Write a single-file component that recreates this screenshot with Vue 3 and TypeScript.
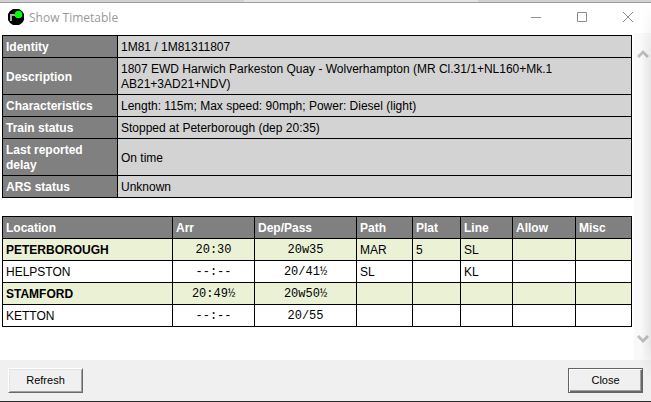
<script setup lang="ts">
interface Detail {
  label: string
  value: string
}

interface Stop {
  location: string
  booked: boolean
  arr: string
  dep: string
  path: string
  plat: string
  line: string
  allow: string
  misc: string
}

const details: Detail[] = [
  { label: 'Identity', value: '1M81 / 1M81311807' },
  {
    label: 'Description',
    value: '1807 EWD Harwich Parkeston Quay - Wolverhampton (MR Cl.31/1+NL160+Mk.1 AB21+3AD21+NDV)',
  },
  { label: 'Characteristics', value: 'Length: 115m; Max speed: 90mph; Power: Diesel (light)' },
  { label: 'Train status', value: 'Stopped at Peterborough (dep 20:35)' },
  { label: 'Last reported delay', value: 'On time' },
  { label: 'ARS status', value: 'Unknown' },
]

const headings: string[] = ['Location', 'Arr', 'Dep/Pass', 'Path', 'Plat', 'Line', 'Allow', 'Misc']

const stops: Stop[] = [
  { location: 'PETERBOROUGH', booked: true, arr: '20:30', dep: '20w35', path: 'MAR', plat: '5', line: 'SL', allow: '', misc: '' },
  { location: 'HELPSTON', booked: false, arr: '--:--', dep: '20/41½', path: 'SL', plat: '', line: 'KL', allow: '', misc: '' },
  { location: 'STAMFORD', booked: true, arr: '20:49½', dep: '20w50½', path: '', plat: '', line: '', allow: '', misc: '' },
  { location: 'KETTON', booked: false, arr: '--:--', dep: '20/55', path: '', plat: '', line: '', allow: '', misc: '' },
]
</script>

<template>
  <div class="desktop">
    <div class="behind"><div class="behind-tab"></div></div>
    <div class="window">
      <header class="titlebar">
        <svg class="app-icon" viewBox="0 0 16 16" aria-hidden="true">
          <path d="M5 0h6l3 2 2 3v6l-2 3-3 2H5l-3-2-2-3V5l2-3z" fill="#000" />
          <path d="M2 5h5v2H4v5H2z" fill="#a8a8a8" />
          <circle cx="10.5" cy="5.5" r="3.8" fill="#00ff00" />
        </svg>
        <span class="title">Show Timetable</span>
        <div class="controls">
          <button type="button" class="control" aria-label="Minimize">
            <svg viewBox="0 0 12 12"><path d="M1 6.5h10" /></svg>
          </button>
          <button type="button" class="control" aria-label="Maximize">
            <svg viewBox="0 0 12 12"><path d="M1.5 1.5h9v9h-9z" /></svg>
          </button>
          <button type="button" class="control" aria-label="Close window">
            <svg viewBox="0 0 12 12"><path d="M1 1l10 10M11 1L1 11" /></svg>
          </button>
        </div>
      </header>

      <div class="body">
        <main class="content">
          <table class="grid details">
            <tbody>
              <tr v-for="d in details" :key="d.label">
                <th scope="row">{{ d.label }}</th>
                <td>{{ d.value }}</td>
              </tr>
            </tbody>
          </table>

          <table class="grid stops">
            <colgroup>
              <col />
              <col class="w-arr" />
              <col class="w-dep" />
              <col class="w-path" />
              <col class="w-plat" />
              <col class="w-line" />
              <col class="w-allow" />
              <col class="w-misc" />
            </colgroup>
            <thead>
              <tr>
                <th v-for="h in headings" :key="h" scope="col">{{ h }}</th>
              </tr>
            </thead>
            <tbody>
              <tr v-for="s in stops" :key="s.location" :class="{ booked: s.booked }">
                <td class="location">{{ s.location }}</td>
                <td class="time">{{ s.arr }}</td>
                <td class="time">{{ s.dep }}</td>
                <td>{{ s.path }}</td>
                <td>{{ s.plat }}</td>
                <td>{{ s.line }}</td>
                <td>{{ s.allow }}</td>
                <td>{{ s.misc }}</td>
              </tr>
            </tbody>
          </table>
        </main>
        <div class="scrollbar" aria-hidden="true">
          <svg viewBox="0 0 12 10"><path d="M1 8l5-5 5 5" /></svg>
          <svg viewBox="0 0 12 10"><path d="M1 2l5 5 5-5" /></svg>
        </div>
      </div>

      <footer class="footer">
        <button type="button" class="push">Refresh</button>
        <button type="button" class="push default">Close</button>
      </footer>
    </div>
  </div>
</template>

<style>
body {
  margin: 0;
}
</style>

<style scoped>
.desktop {
  display: flex;
  flex-direction: column;
  min-height: 100vh;
  font-family: "Liberation Sans", Arial, sans-serif;
  font-size: 12px;
  line-height: 15px;
  color: #000;
}

.behind {
  display: flex;
  justify-content: center;
  height: 2px;
  background: #d2d2d2;
}

.behind-tab {
  width: 36%;
  margin-left: 11%;
  background: #e4e4e4;
}

.window {
  position: relative;
  flex: 1;
  display: flex;
  flex-direction: column;
  box-sizing: border-box;
  border-top: 1px solid #9c9c9c;
  border-bottom: 1px solid #2b2b2b;
  background: #fff;
}

.window::after {
  content: "";
  position: absolute;
  top: 0;
  right: 0;
  bottom: 24px;
  width: 10px;
  background: linear-gradient(to right, rgba(0, 0, 0, 0), rgba(0, 0, 0, 0.08));
  mask-image: linear-gradient(to bottom, transparent, #000 60px, #000 calc(100% - 30px), transparent);
  pointer-events: none;
}

.titlebar {
  display: flex;
  align-items: center;
  padding: 0 0 2px 8px;
}

.app-icon {
  width: 16px;
  height: 16px;
}

.title {
  flex: 1;
  margin-left: 5px;
  font-family: "Open Sans", "Segoe UI", sans-serif;
  color: #999;
}

.controls {
  display: flex;
}

.control {
  display: flex;
  align-items: center;
  justify-content: center;
  width: 46px;
  height: 28px;
  padding: 0;
  border: 0;
  background: none;
}

.control svg {
  width: 12px;
  height: 12px;
  fill: none;
  stroke: #8c8c8c;
}

.body {
  flex: 1;
  display: flex;
}

.content {
  flex: 1;
  display: flex;
  flex-direction: column;
  gap: 18px;
  padding: 2px 2px 18px;
}

.grid {
  width: 100%;
  table-layout: fixed;
  border-collapse: collapse;
}

.grid th,
.grid td {
  height: 15px;
  padding: 4px 3px 2px;
  border: 1px solid #000;
  text-align: left;
}

.grid th {
  background: #808080;
  color: #fff;
}

.details th {
  width: 108px;
}

.details td {
  background: #d3d3d3;
}

.w-arr {
  width: 82px;
}

.w-dep {
  width: 102px;
}

.w-path,
.w-misc {
  width: 56px;
}

.w-plat {
  width: 48px;
}

.w-line {
  width: 52px;
}

.w-allow {
  width: 63px;
}

.booked td {
  background: #eaf1d5;
}

.booked .location {
  font-weight: bold;
}

.grid .time {
  font-family: "Liberation Mono", "Courier New", monospace;
  text-align: center;
}

.scrollbar {
  display: flex;
  flex-direction: column;
  justify-content: space-between;
  align-items: center;
  width: 17px;
  padding: 16px 0;
  box-sizing: border-box;
  background: #f9f9f9;
}

.scrollbar svg {
  width: 12px;
  height: 10px;
  fill: none;
  stroke: #bfbfbf;
  stroke-width: 3;
}

.footer {
  display: flex;
  justify-content: space-between;
  padding: 8px;
  background: #f0f0f0;
}

.push {
  width: 75px;
  height: 25px;
  padding: 0;
  border: 1px solid;
  border-color: #fff #696969 #696969 #fff;
  background: #f0f0f0;
  box-shadow: inset 1px 1px #e3e3e3, inset -1px -1px #a0a0a0;
  font-family: "Liberation Sans", Arial, sans-serif;
  font-size: 11px;
  line-height: 15px;
  color: #000;
}

.push.default {
  border-color: #646464;
  box-shadow: inset 1px 1px #fff, inset -1px -1px #696969, inset -2px -2px #a0a0a0;
}
</style>
